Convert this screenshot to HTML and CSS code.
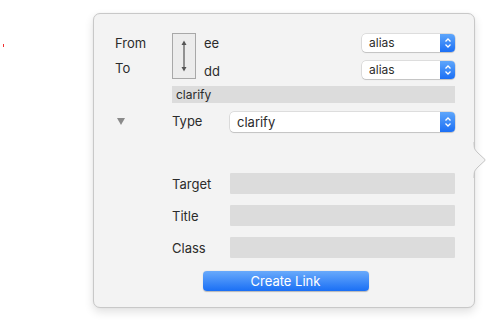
FILE: index.html
```html
<!DOCTYPE html>
<html>
<head>
<meta charset="utf-8">
<link rel="stylesheet" href="styles.css">
</head>
<body>
<div class="caret"></div>
<div class="popover">
  <svg class="tail" width="16" height="36" viewBox="0 0 16 36">
    <path d="M0.5 0 C0.5 6 2 8 5 11 L12 17.5 Q13 18 12 18.5 L5 25 C2 28 0.5 30 0.5 36" fill="#f3f3f3" stroke="#c4c4c4" stroke-width="1"/>
    <rect x="-1" y="0" width="1.5" height="36" fill="#f3f3f3"/>
  </svg>
  <div class="ends">
    <div class="labels">
      <div class="lbl">From</div>
      <div class="lbl">To</div>
    </div>
    <div class="swap">
      <svg width="10" height="36" viewBox="0 0 10 36">
        <line x1="5" y1="4" x2="5" y2="32" stroke="#555" stroke-width="1.2"/>
        <path d="M2.5 7 L5 2.5 L7.5 7 Z" fill="#555"/>
        <path d="M2.5 29 L5 33.5 L7.5 29 Z" fill="#555"/>
      </svg>
    </div>
    <div class="names">
      <div class="name">ee</div>
      <div class="name">dd</div>
    </div>
    <div class="selects">
      <div class="select small"><span class="sel-text">alias</span><span class="stepper"><svg width="8" height="12" viewBox="0 0 8 12"><path d="M1.5 4.5 L4 2 L6.5 4.5 M1.5 7.5 L4 10 L6.5 7.5" fill="none" stroke="#fff" stroke-width="1.3"/></svg></span></div>
      <div class="select small"><span class="sel-text">alias</span><span class="stepper"><svg width="8" height="12" viewBox="0 0 8 12"><path d="M1.5 4.5 L4 2 L6.5 4.5 M1.5 7.5 L4 10 L6.5 7.5" fill="none" stroke="#fff" stroke-width="1.3"/></svg></span></div>
    </div>
  </div>
  <div class="rel-field">clarify</div>
  <div class="type-row">
    <div class="disclosure"></div>
    <div class="lbl type-lbl">Type</div>
    <div class="select wide"><span class="sel-text big">clarify</span><span class="stepper"><svg width="8" height="12" viewBox="0 0 8 12"><path d="M1.5 4.5 L4 2 L6.5 4.5 M1.5 7.5 L4 10 L6.5 7.5" fill="none" stroke="#fff" stroke-width="1.3"/></svg></span></div>
  </div>
  <div class="attrs">
    <div class="attr"><div class="lbl attr-lbl">Target</div><div class="field"></div></div>
    <div class="attr"><div class="lbl attr-lbl">Title</div><div class="field"></div></div>
    <div class="attr"><div class="lbl attr-lbl">Class</div><div class="field"></div></div>
  </div>
  <div class="actions">
    <button class="btn">Create Link</button>
  </div>
</div>
</body>
</html>
```

FILE: styles.css
```css
* { box-sizing: border-box; }
html, body { margin: 0; padding: 0; background: #fff; }
body {
  width: 488px; height: 321px; overflow: hidden; position: relative;
  font-family: "Inter", "Liberation Sans", sans-serif;
  font-size: 13px; color: #2b2b2b;
}
.caret {
  position: absolute; left: 3px; top: 44px; width: 1px; height: 3px; background: #f03030;
}
.popover {
  position: relative;
  margin: 13px 0 0 93px;
  width: 382px; height: 295px;
  background: #f3f3f3;
  border: 1px solid #c8c8c8;
  border-radius: 7px;
  box-shadow: 0 4px 10px rgba(0,0,0,0.12), 0 0 2px rgba(0,0,0,0.05);
  padding: 19px 19px 0 21px;
}
.tail { position: absolute; right: -15px; top: 128px; overflow: visible; }
.lbl { line-height: 16px; }
.ends { display: flex; height: 46px; }
.labels { width: 57px; display: flex; flex-direction: column; padding-top: 2px; gap: 9px; }
.swap {
  width: 24px; height: 46px; border: 1px solid #a8a8a8; background: #ececec;
  display: flex; align-items: center; justify-content: center;
}
.names { margin-left: 8px; display: flex; flex-direction: column; padding-top: 2px; gap: 12px; }
.name { line-height: 16px; }
.selects { margin-left: auto; display: flex; flex-direction: column; padding-top: 1px; gap: 9px; }
.select {
  display: flex; align-items: stretch;
  background: #fff; border-radius: 4px;
  box-shadow: 0 0 0 0.5px rgba(0,0,0,0.18), 0 1px 1px rgba(0,0,0,0.12);
  overflow: hidden;
}
.select.small { width: 93px; height: 18px; }
.select.wide { width: 225px; height: 20px; margin-left: auto; }
.sel-text { flex: 1; padding-left: 7px; font-size: 12px; line-height: 18px; }
.sel-text.big { font-size: 13px; line-height: 20px; }
.stepper {
  width: 15px; background: linear-gradient(#5ea6fb, #1b6ff5);
  display: flex; align-items: center; justify-content: center;
}
.rel-field {
  margin: 7px 0 0 57px; height: 17px; background: #dcdcdc;
  font-size: 12px; line-height: 17px; padding-left: 4px;
}
.type-row { display: flex; align-items: center; margin-top: 9px; height: 20px; }
.disclosure {
  width: 0; height: 0; margin-left: 2px; margin-top: -2px;
  border-left: 4px solid transparent; border-right: 4px solid transparent;
  border-top: 7px solid #8a8a8a;
}
.type-lbl { margin-left: 47px; margin-top: -3px; }
.attrs { margin: 41px 0 0 57px; display: flex; flex-direction: column; gap: 11px; }
.attr { display: flex; align-items: center; height: 21px; }
.attr-lbl { width: 58px; }
.field { flex: 1; height: 21px; background: #dcdcdc; border-radius: 1px; }
.actions { display: flex; justify-content: center; margin-top: 13px; padding-left: 1px; }
.btn {
  width: 166px; height: 20px; border: none; border-radius: 4px;
  background: linear-gradient(#69aafb, #1a6ff5);
  box-shadow: 0 0.5px 1px rgba(0,0,0,0.25);
  color: #fff; font-family: inherit; font-size: 13px; padding: 0; line-height: 20px;
}
```
